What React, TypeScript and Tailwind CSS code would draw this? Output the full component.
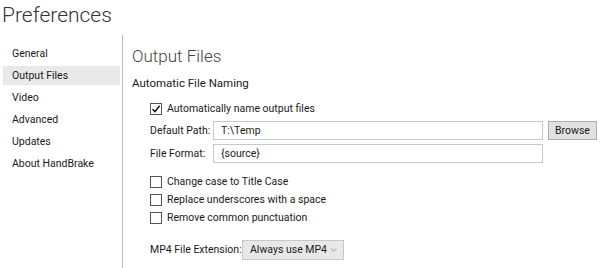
import React from 'react';

const font = { fontFamily: 'Roboto, "Open Sans", sans-serif' };

const navItems = ['General', 'Output Files', 'Video', 'Advanced', 'Updates', 'About HandBrake'];

function CheckBox({ checked }: { checked?: boolean }) {
  return (
    <span className="flex h-[12px] w-[12px] shrink-0 items-center justify-center border border-[#555] bg-white">
      {checked && (
        <svg viewBox="0 0 10 10" className="h-[10px] w-[10px]">
          <path d="M1.5 5.2 L4 7.6 L8.6 1.8" fill="none" stroke="#111" strokeWidth="1.5" />
        </svg>
      )}
    </span>
  );
}

function CheckRow({ label, checked }: { label: string; checked?: boolean }) {
  return (
    <label className="flex h-[18px] items-center gap-[5px] whitespace-nowrap text-[10.5px] text-[#1a1a1a]">
      <CheckBox checked={checked} />
      <span>{label}</span>
    </label>
  );
}

export default function App() {
  return (
    <div className="h-[268px] w-[605px] overflow-hidden bg-white text-[#1a1a1a]" style={font}>
      {/* Title */}
      <div className="h-[35px] whitespace-nowrap pl-[2px] text-[21px] font-light leading-[30px] text-[#333]">
        Preferences
      </div>

      <div className="flex h-[233px]">
        {/* Sidebar */}
        <div className="w-[123px] shrink-0 border-r border-[#bdbdbd] pl-[3px] pr-[2px] pt-[9px]">
          <ul className="flex flex-col gap-[3px]">
            {navItems.map((item) => (
              <li
                key={item}
                className={`flex h-[19px] items-center whitespace-nowrap px-[9px] text-[10.5px] ${
                  item === 'Output Files' ? 'bg-[#e9e9e9]' : ''
                }`}
              >
                {item}
              </li>
            ))}
          </ul>
        </div>

        {/* Content */}
        <div className="flex-1 pl-[9px] pt-[9px]">
          <h1 className="whitespace-nowrap text-[17px] font-light leading-[24px] text-[#444]">Output Files</h1>
          <h2 className="mt-[6px] whitespace-nowrap text-[11.5px] leading-[18px]">Automatic File Naming</h2>

          <div className="mt-[8px] pl-[18px]">
            <CheckRow label="Automatically name output files" checked />

            <div className="mt-[3px] flex items-center">
              <span className="w-[63px] shrink-0 whitespace-nowrap text-[10.5px]">Default Path:</span>
              <div className="flex h-[19px] w-[330px] shrink-0 items-center border border-[#c8c8c8] px-[7px] text-[10.5px]">
                T:\Temp
              </div>
              <button className="ml-[5px] h-[19px] w-[49px] shrink-0 border border-[#adadad] bg-[#e1e1e1] text-[10.5px]">
                Browse
              </button>
            </div>

            <div className="mt-[4px] flex items-center">
              <span className="w-[63px] shrink-0 whitespace-nowrap text-[10.5px]">File Format:</span>
              <div className="flex h-[19px] w-[330px] shrink-0 items-center border border-[#c8c8c8] px-[7px] text-[10.5px]">
                {'{source}'}
              </div>
            </div>

            <div className="mt-[10px] flex flex-col">
              <CheckRow label="Change case to Title Case" />
              <CheckRow label="Replace underscores with a space" />
              <CheckRow label="Remove common punctuation" />
            </div>

            <div className="mt-[13px] flex items-center">
              <span className="w-[92px] shrink-0 whitespace-nowrap text-[10.5px]">MP4 File Extension:</span>
              <div className="flex h-[20px] w-[102px] shrink-0 items-center justify-between border border-[#c8c8c8] bg-[#e8e8e8] pl-[7px] pr-[6px] text-[10.5px]">
                <span className="whitespace-nowrap">Always use MP4</span>
                <svg viewBox="0 0 8 5" className="h-[4px] w-[7px]">
                  <path d="M0.5 0.5 L4 4 L7.5 0.5" fill="none" stroke="#888" strokeWidth="1" />
                </svg>
              </div>
            </div>
          </div>
        </div>
      </div>
    </div>
  );
}
